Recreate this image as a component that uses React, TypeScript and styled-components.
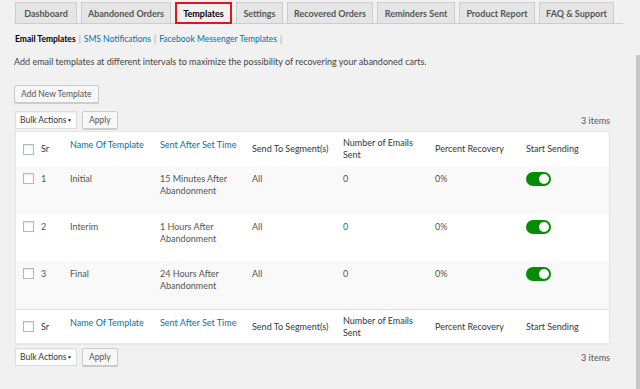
import React from "react";
import styled, { createGlobalStyle } from "styled-components";

const Global = createGlobalStyle`
  html, body { margin: 0; padding: 0; background: #f1f1f1; }
  body { font-family: Lato, "Open Sans", sans-serif; font-size: 9px; color: #444; }
  * { box-sizing: border-box; }
`;

const Page = styled.div`
  position: relative;
  width: 640px;
  height: 389px;
  overflow: hidden;
  padding: 2px 0 0 14px;
`;

const Scroll = styled.div`
  position: absolute;
  right: 0;
  top: 55px;
  width: 4px;
  bottom: 0;
  background: #c9c9c9;
`;

const Tabs = styled.div`
  display: flex;
  gap: 4px;
  width: 609px;
  border-bottom: 1px solid #ccc;
  padding-left: 1px;
`;

const Tab = styled.div<{ $active?: boolean; $w: number }>`
  height: 22px;
  margin-bottom: -1px;
  display: flex;
  align-items: center;
  justify-content: center;
  font-weight: 700;
  font-size: 9px;
  white-space: nowrap;
  color: ${(p) => (p.$active ? "#000" : "#555")};
  background: ${(p) => (p.$active ? "#f1f1f1" : "#e5e5e5")};
  border: ${(p) => (p.$active ? "2px solid #e3141b" : "1px solid #ccc")};
  width: ${(p) => p.$w}px;
`;

const SubNav = styled.div`
  margin-top: 8px;
  height: 14px;
  display: flex;
  align-items: center;
  gap: 3px;
  padding-left: 1px;
  color: #999;
  font-size: 8.5px;
  white-space: nowrap;
`;

const SubCurrent = styled.span`
  color: #000;
  font-weight: 700;
`;

const Link = styled.a`
  color: #0073aa;
  text-decoration: none;
`;

const Desc = styled.p`
  margin: 9px 0 0 0;
  line-height: 14px;
  color: #444;
`;

const Button = styled.button`
  font-family: inherit;
  font-size: 8.5px;
  color: #555;
  background: #f7f7f7;
  border: 1px solid #ccc;
  border-radius: 2px;
  box-shadow: 0 1px 0 #ccc;
  padding: 0 6px;
  height: 18px;
  white-space: nowrap;
  cursor: pointer;
`;

const AddWrap = styled.div`
  margin-top: 16px;
`;

const Actions = styled.div<{ $mt: number }>`
  margin-top: ${(p) => p.$mt}px;
  width: 596px;
  display: flex;
  align-items: center;
  gap: 5px;
  padding-left: 1px;
`;

const Select = styled.div`
  width: 62px;
  height: 18px;
  background: #fff;
  border: 1px solid #ddd;
  box-shadow: inset 0 1px 2px rgba(0,0,0,0.07);
  display: flex;
  align-items: center;
  justify-content: space-between;
  padding: 0 4px 0 4px;
  color: #32373c;
  font-size: 8.5px;
  white-space: nowrap;
`;

const Arrow = styled.span`
  font-size: 5px;
  color: #222;
`;

const Count = styled.span`
  margin-left: auto;
  color: #555;
`;

const Table = styled.div`
  margin-top: 2px;
  margin-left: 1px;
  width: 595px;
  background: #fff;
  border: 1px solid #e5e5e5;
  box-shadow: 0 1px 1px rgba(0,0,0,0.04);
`;

const cols = "25px 29px 90px 92px 91px 92px 91px 1fr";

const HeadRow = styled.div<{ $top?: boolean }>`
  display: grid;
  grid-template-columns: ${cols};
  align-items: center;
  height: 34px;
  background: #fff;
  color: #32373c;
  border-top: ${(p) => (p.$top ? "1px solid #e1e1e1" : "none")};
  line-height: 12px;
`;

const Row = styled.div<{ $alt?: boolean }>`
  display: grid;
  grid-template-columns: ${cols};
  align-items: start;
  height: ${(p) => (p.$alt ? 48 : 47)}px;
  padding-top: 7px;
  background: ${(p) => (p.$alt ? "#f9f9f9" : "#fff")};
  color: #555;
  line-height: 12px;
`;

const CbCell = styled.div`
  padding-left: 7px;
  display: flex;
  align-items: center;
`;

const Checkbox = styled.span`
  display: inline-block;
  width: 11px;
  height: 11px;
  border: 1px solid #b4b9be;
  background: #fff;
  box-shadow: inset 0 1px 2px rgba(0,0,0,0.1);
`;

const Cell = styled.div`
  white-space: nowrap;
`;

const SortLink = styled.a`
  color: #0073aa;
  text-decoration: none;
  position: relative;
  top: -4px;
`;

const Toggle = styled.span`
  display: inline-flex;
  align-items: center;
  justify-content: flex-end;
  width: 25px;
  height: 14px;
  margin-top: -1px;
  border-radius: 7px;
  background: #088a08;
  padding-right: 2px;
`;

const Knob = styled.span`
  width: 10px;
  height: 10px;
  border-radius: 50%;
  background: #fff;
`;

const tabs: [string, number][] = [
  ["Dashboard", 62],
  ["Abandoned Orders", 90],
  ["Templates", 57],
  ["Settings", 47],
  ["Recovered Orders", 86],
  ["Reminders Sent", 78],
  ["Product Report", 76],
  ["FAQ & Support", 75],
];

const rows = [
  { n: 1, name: "Initial", t: "15 Minutes After", link: false },
  { n: 2, name: "Interim", t: "1 Hours After", link: true },
  { n: 3, name: "Final", t: "24 Hours After", link: false },
];

function Header({ top }: { top?: boolean }) {
  return (
    <HeadRow $top={top}>
      <CbCell>
        <Checkbox />
      </CbCell>
      <Cell>Sr</Cell>
      <Cell>
        <SortLink>Name Of Template</SortLink>
      </Cell>
      <Cell>
        <SortLink>Sent After Set Time</SortLink>
      </Cell>
      <Cell>Send To Segment(s)</Cell>
      <Cell>
        Number of Emails
        <br />
        Sent
      </Cell>
      <Cell>Percent Recovery</Cell>
      <Cell>Start Sending</Cell>
    </HeadRow>
  );
}

export default function App() {
  return (
    <Page>
      <Global />
      <Tabs>
        {tabs.map(([t, w]) => (
          <Tab key={t} $active={t === "Templates"} $w={w}>
            {t}
          </Tab>
        ))}
      </Tabs>
      <SubNav>
        <SubCurrent>Email Templates</SubCurrent> |<Link>SMS Notifications</Link> |
        <Link>Facebook Messenger Templates</Link> |
      </SubNav>
      <Desc>
        Add email templates at different intervals to maximize the possibility of recovering your
        abandoned carts.
      </Desc>
      <AddWrap>
        <Button>Add New Template</Button>
      </AddWrap>
      <Actions $mt={8}>
        <Select>
          Bulk Actions <Arrow>▼</Arrow>
        </Select>
        <Button>Apply</Button>
        <Count>3 items</Count>
      </Actions>
      <Table>
        <Header />
        {rows.map((r) => (
          <Row key={r.n} $alt={r.n % 2 === 1}>
            <CbCell>
              <Checkbox />
            </CbCell>
            <Cell>{r.n}</Cell>
            <Cell>{r.name}</Cell>
            <Cell>
              {r.t}
              <br />
              Abandonment
            </Cell>
            <Cell>All</Cell>
            <Cell>{r.link ? <Link>0</Link> : "0"}</Cell>
            <Cell>0%</Cell>
            <Cell>
              <Toggle>
                <Knob />
              </Toggle>
            </Cell>
          </Row>
        ))}
        <Header top />
      </Table>
      <Actions $mt={4}>
        <Select>
          Bulk Actions <Arrow>▼</Arrow>
        </Select>
        <Button>Apply</Button>
        <Count>3 items</Count>
      </Actions>
      <Scroll />
    </Page>
  );
}
